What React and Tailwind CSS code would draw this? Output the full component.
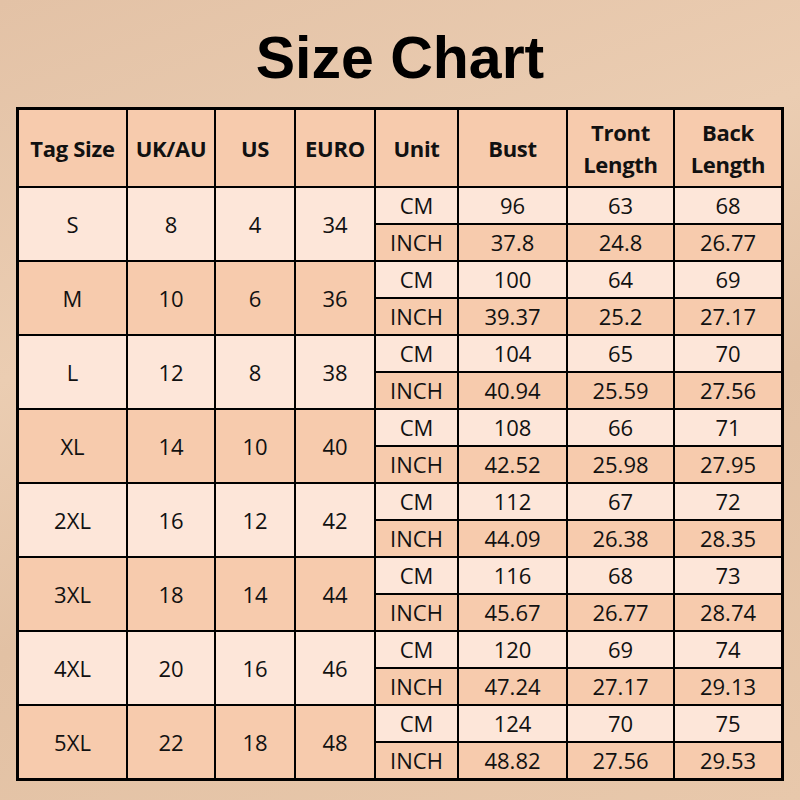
const sizes = [
  { tag: "S", uk: "8", us: "4", euro: "34", cm: ["96", "63", "68"], inch: ["37.8", "24.8", "26.77"] },
  { tag: "M", uk: "10", us: "6", euro: "36", cm: ["100", "64", "69"], inch: ["39.37", "25.2", "27.17"] },
  { tag: "L", uk: "12", us: "8", euro: "38", cm: ["104", "65", "70"], inch: ["40.94", "25.59", "27.56"] },
  { tag: "XL", uk: "14", us: "10", euro: "40", cm: ["108", "66", "71"], inch: ["42.52", "25.98", "27.95"] },
  { tag: "2XL", uk: "16", us: "12", euro: "42", cm: ["112", "67", "72"], inch: ["44.09", "26.38", "28.35"] },
  { tag: "3XL", uk: "18", us: "14", euro: "44", cm: ["116", "68", "73"], inch: ["45.67", "26.77", "28.74"] },
  { tag: "4XL", uk: "20", us: "16", euro: "46", cm: ["120", "69", "74"], inch: ["47.24", "27.17", "29.13"] },
  { tag: "5XL", uk: "22", us: "18", euro: "48", cm: ["124", "70", "75"], inch: ["48.82", "27.56", "29.53"] },
];

const headers = ["Tag Size", "UK/AU", "US", "EURO", "Unit", "Bust", "Tront Length", "Back Length"];

const LIGHT = "bg-[#fde6d9]";
const DARK = "bg-[#f7cbad]";

export default function App() {
  return (
    <div className="min-h-[800px] w-[800px] bg-[#e7c6a9] bg-[linear-gradient(160deg,#e3c2a6_0%,#ebcdb2_35%,#e2c1a4_60%,#e8c8ab_100%)] font-['Open_Sans',sans-serif] text-[#111]">
      <h1 className="pt-[29px] text-center font-['Liberation_Sans',Arial,sans-serif] text-[59px] font-bold leading-[58px] text-black">
        Size Chart
      </h1>
      <div className="mx-auto mt-[20px] w-[768px] border-[3px] border-black bg-black">
        <div className="grid grid-cols-[107px_86px_78px_78px_81px_107px_105px_106px] grid-rows-[76px_repeat(16,35px)] gap-[2px]">
          {headers.map((h) => (
            <div
              key={h}
              className={`${DARK} flex items-center justify-center text-center text-[22px] font-bold leading-[32px] tracking-[-0.3px]`}
            >
              {h}
            </div>
          ))}
          {sizes.map((s, i) => {
            const groupBg = i % 2 === 0 ? LIGHT : DARK;
            return [
              [s.tag, s.uk, s.us, s.euro].map((v, j) => (
                <div
                  key={`${s.tag}-${j}`}
                  className={`${groupBg} row-span-2 flex items-center justify-center text-[22px]`}
                >
                  {v}
                </div>
              )),
              ["CM", ...s.cm].map((v, j) => (
                <div
                  key={`${s.tag}-cm-${j}`}
                  className={`${LIGHT} flex items-center justify-center text-[22px]`}
                  style={{ gridColumn: 5 + j }}
                >
                  {v}
                </div>
              )),
              ["INCH", ...s.inch].map((v, j) => (
                <div
                  key={`${s.tag}-in-${j}`}
                  className={`${DARK} flex items-center justify-center text-[22px]`}
                  style={{ gridColumn: 5 + j }}
                >
                  {v}
                </div>
              )),
            ];
          })}
        </div>
      </div>
    </div>
  );
}
